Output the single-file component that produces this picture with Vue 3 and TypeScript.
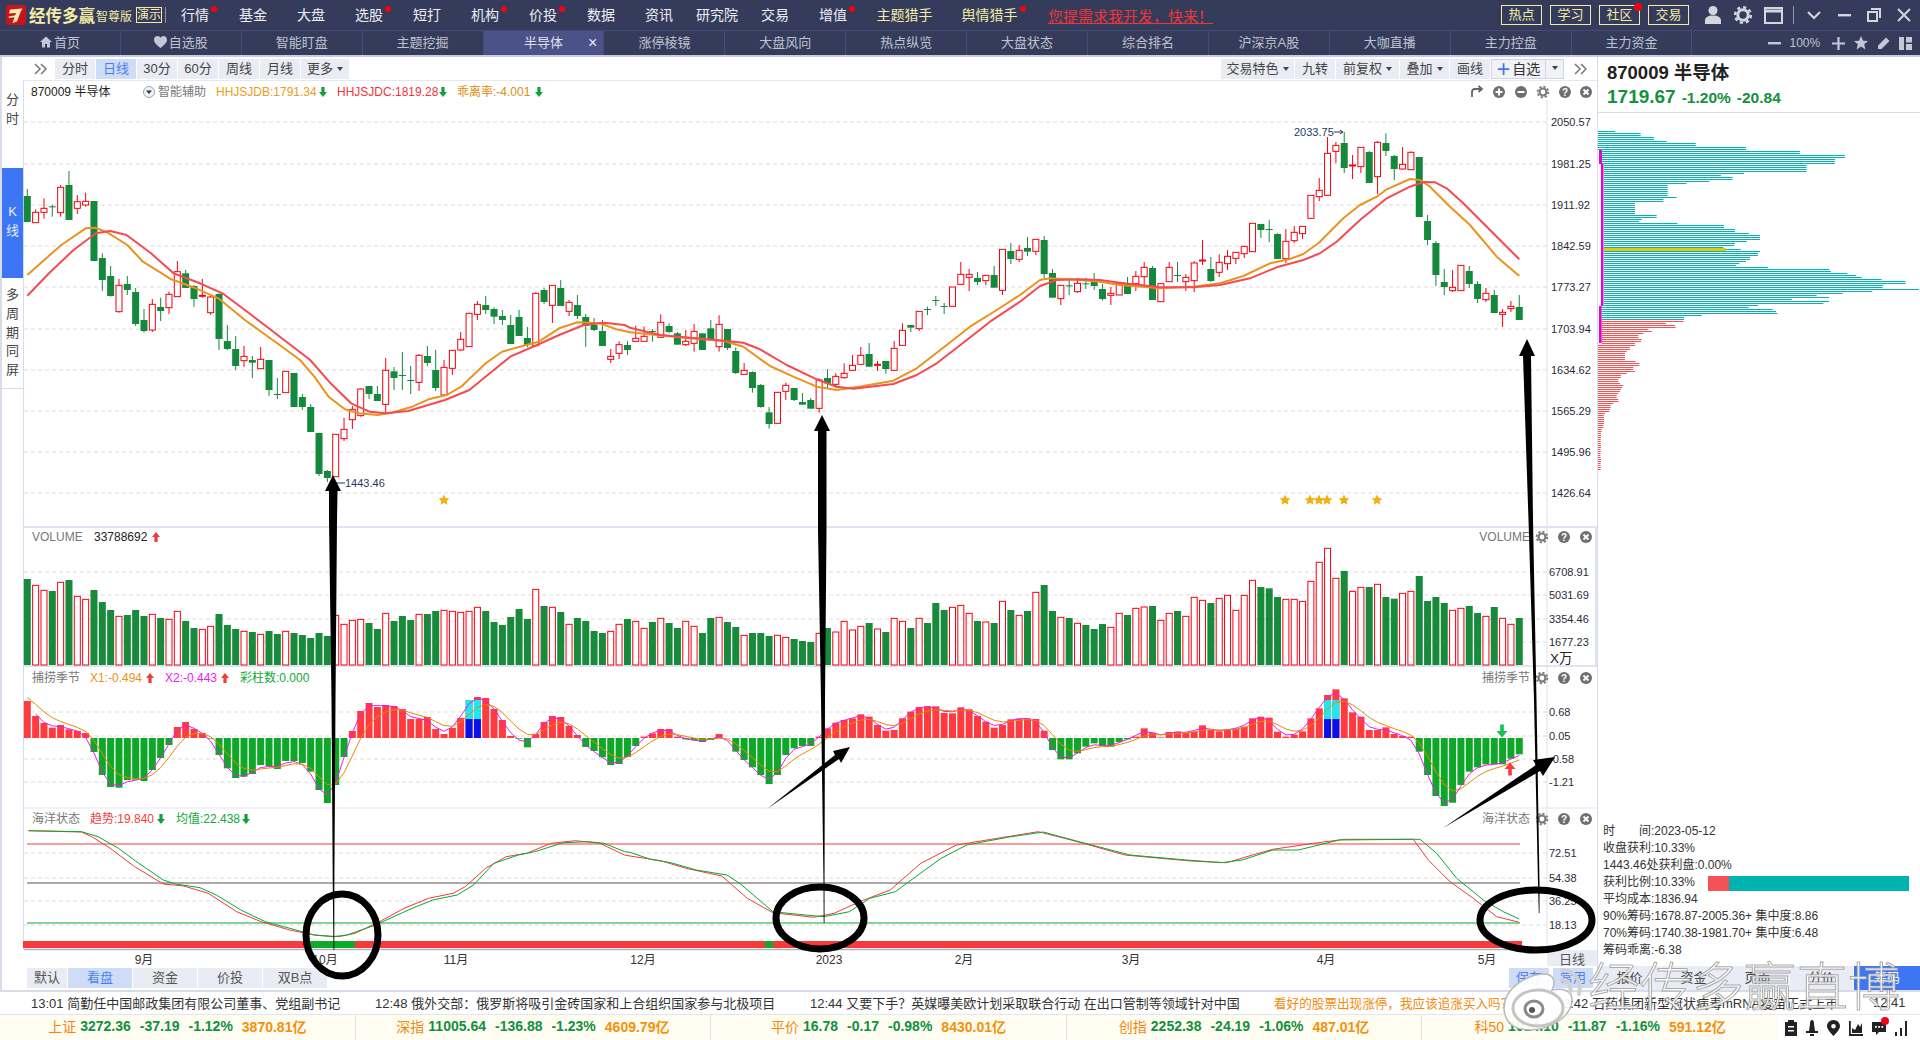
<script setup lang="ts">
const menu = [
  { t: '行情', dot: true }, { t: '基金' }, { t: '大盘' }, { t: '选股', dot: true }, { t: '短打' },
  { t: '机构', dot: true }, { t: '价投', dot: true }, { t: '数据' }, { t: '资讯' }, { t: '研究院' },
  { t: '交易' }, { t: '增值', dot: true },
]
const tabs = ['首页', '自选股', '智能盯盘', '主题挖掘', '半导体', '涨停棱镜', '大盘风向', '热点纵览', '大盘状态', '综合排名', '沪深京A股', '大咖直播', '主力控盘', '主力资金']
const periods = ['分时', '日线', '30分', '60分', '周线', '月线']
const news = [
  { t: '13:01 简勤任中国邮政集团有限公司董事、党组副书记', c: 'n1' },
  { t: '12:48 俄外交部：俄罗斯将吸引金砖国家和上合组织国家参与北极项目', c: 'n2' },
  { t: '12:44 又要下手？英媒曝美欧计划采取联合行动 在出口管制等领域针对中国', c: 'n3' },
  { t: '看好的股票出现涨停，我应该追涨买入吗？', c: 'n4' },
  { t: '2:42 石药集团新型冠状病毒mRNA疫苗正式上市', c: 'n5' },
  { t: '12:41', c: 'n6' },
]
const ticker = [
  ['上证', '3272.36', '-37.19', '-1.12%', '3870.81亿'],
  ['深指', '11005.64', '-136.88', '-1.23%', '4609.79亿'],
  ['平价', '16.78', '-0.17', '-0.98%', '8430.01亿'],
  ['创指', '2252.38', '-24.19', '-1.06%', '487.01亿'],
  ['科50', '1014.10', '-11.87', '-1.16%', '591.12亿'],
]
const info = ['时　　间:2023-05-12', '收盘获利:10.33%', '1443.46处获利盘:0.00%', '获利比例:10.33%', '平均成本:1836.94', '90%筹码:1678.87-2005.36+ 集中度:8.86', '70%筹码:1740.38-1981.70+ 集中度:6.48', '筹码乖离:-6.38']

const X = (i: number) => 27.3 + 8.335 * i
const Cd: number[][] = [
[0,228,306,207,306],[1,277,308,268,308],[1,265,277,235,296],[0,259,261,254,290],[1,202,278,195,290],[0,195,300,153,300],[1,245,265,225,282],[1,244,255,218,260],[0,243,423,243,423],[0,414,480,400,513],
[0,468,528,438,530],[1,496,575,477,578],[0,492,510,468,525],[0,516,612,504,618],[0,600,633,567,638],[1,553,630,537,636],[0,561,573,533,603],[1,523,563,515,582],[1,455,530,423,530],[0,460,504,450,504],
[0,498,537,495,561],[1,526,527,477,533],[1,531,578,525,585],[0,522,657,520,690],[0,663,687,615,690],[0,687,738,648,750],[1,709,722,678,741],[0,720,728,708,774],[1,718,746,681,746],[0,720,810,720,828],
[0,822,824,774,837],[1,754,818,754,818],[0,759,861,759,861],[0,831,861,822,870],[0,861,936,852,936],[0,939,1062,938,1068],[0,1053,1074,1050,1086],[1,943,1070,943,1070],[1,928,956,894,963],[1,868,899,858,927],
[1,807,887,805,890],[0,798,822,798,837],[0,822,843,798,843],[1,751,853,714,880],[0,754,774,741,810],[0,765,768,696,810],[0,780,782,738,822],[1,706,787,702,813],[0,708,729,678,738],[0,750,804,690,813],
[1,742,825,720,825],[1,691,745,691,765],[1,658,690,636,693],[1,580,680,578,680],[1,553,583,543,600],[0,555,570,528,582],[0,567,590,562,612],[0,588,600,570,615],[0,615,672,585,672],[0,591,648,570,648],
[0,654,675,621,682],[1,520,677,517,677],[0,510,546,504,552],[1,496,556,496,609],[0,504,558,480,558],[1,547,574,540,588],[0,555,588,525,597],[0,591,618,582,681],[0,615,630,594,633],[0,633,678,600,678],
[1,709,718,687,729],[1,674,700,664,717],[0,675,690,663,705],[1,655,664,617,664],[1,649,664,620,664],[0,633,636,627,665],[1,607,652,583,652],[0,618,636,610,640],[0,640,674,636,674],[1,664,674,630,678],
[1,634,670,612,695],[0,640,690,640,690],[0,625,660,600,660],[1,613,680,586,695],[0,627,684,627,690],[0,693,759,682,762],[1,751,763,729,763],[0,756,804,754,818],[0,795,861,792,863],[0,877,912,861,926],
[1,817,910,817,910],[1,796,814,788,840],[0,804,840,804,843],[0,846,854,819,854],[0,840,866,834,866],[1,780,865,775,878],[0,774,790,747,805],[1,769,793,760,803],[1,760,773,730,776],[1,736,751,705,751],
[1,706,733,681,733],[0,702,740,669,741],[1,733,735,723,753],[0,723,747,723,761],[1,685,751,663,751],[1,631,676,610,676],[0,615,623,615,636],[1,574,626,574,633],[0,567,569,560,585],[0,540,542,528,558],
[0,558,560,549,582],[1,501,559,501,559],[1,463,493,426,493],[1,463,472,447,513],[0,474,486,456,495],[1,466,482,466,495],[0,465,503,438,503],[1,388,511,388,525],[0,393,417,369,432],[1,391,418,375,426],
[0,384,395,351,408],[1,358,394,358,405],[0,360,462,348,475],[0,459,533,447,533],[1,496,536,496,555],[0,496,498,474,525],[1,490,515,474,519],[0,490,492,474,507],[0,486,498,459,510],[0,507,537,492,542],
[1,520,526,501,555],[1,490,525,490,525],[0,492,522,471,522],[1,469,491,453,513],[1,442,470,426,495],[0,444,540,438,540],[1,491,545,491,545],[1,442,485,426,485],[0,465,467,426,486],[1,472,485,462,513],
[1,429,482,423,516],[1,420,423,360,435],[0,447,483,411,486],[1,427,457,403,471],[1,409,431,390,450],[1,397,415,397,432],[1,379,401,379,414],[1,310,395,310,395],[0,312,330,312,354],[0,327,329,300,366],
[0,342,417,340,417],[1,364,416,327,429],[1,337,362,318,369],[1,319,341,319,357],[1,226,295,226,295],[1,211,230,174,243],[1,100,226,51,226],[1,76,94,66,129],[0,69,144,36,159],[1,135,137,105,177],
[1,82,140,82,159],[0,96,189,93,189],[1,67,170,63,222],[0,69,93,40,108],[0,108,147,105,180],[1,133,147,81,149],[1,97,149,94,149],[0,111,291,111,291],[0,303,360,285,375],[0,369,465,363,498],
[0,486,501,447,525],[1,502,512,450,516],[1,436,512,436,512],[0,453,492,438,504],[0,492,537,483,549],[1,520,539,504,546],[0,525,579,510,579],[1,577,583,567,621],[1,559,566,543,576],[0,561,600,525,600],
]
const Ym = (v: number) => 120 + v / 3
const candles = Cd.map((c, i) => ({
  x: X(i), up: c[0] === 1, top: Ym(c[1]), h: Math.max(1, (c[2] - c[1]) / 3), hi: Ym(c[3]), lo: Ym(c[4]),
}))

const pts = (a: number[][], fx: (x: number) => number, fy: (y: number) => number) => a.map(p => `${fx(p[0]).toFixed(1)},${fy(p[1]).toFixed(1)}`).join(' ')
const z7 = (x: number) => x / 2.45
const z10 = (x: number) => 630 + x / 3
const z11 = (x: number) => 1080 + x / 3
const maOrange = [
  pts([[67,465],[150,375],[210,325],[232,323],[260,335],[312,375],[350,425],[420,478],[480,505],[535,535],[600,600],[640,635],[685,675],[735,720],[770,770],[805,830],[845,868],[880,880],[925,885],[960,878],[1010,860],[1050,838],[1095,825],[1130,800],[1190,730],[1230,695],[1280,678],[1320,665],[1370,625],[1415,607],[1470,610],[1510,628]], z7, Ym),
  pts([[0,637],[80,645],[180,655],[280,662],[340,680],[420,738],[490,770],[560,800],[620,810],[700,798],[790,782],[860,745],[950,675],[1020,620],[1100,570],[1170,525],[1230,480],[1260,475]], z10, Ym),
  pts([[0,480],[60,485],[120,495],[240,505],[340,500],[420,490],[490,468],[570,430],[630,417],[670,402],[715,370],[790,295],[840,255],[890,230],[920,208],[990,177],[1020,180],[1050,200],[1110,260],[1170,315],[1250,410],[1318,468]], z11, Ym),
].join(' ')
const maRed = [
  pts([[67,527],[120,460],[180,390],[235,340],[270,333],[310,345],[370,400],[425,460],[490,490],[545,520],[600,570],[680,645],[760,720],[810,790],[860,850],[905,875],[945,880],[1000,873],[1090,840],[1150,810],[1200,760],[1250,710],[1310,678],[1370,645],[1430,615],[1480,608],[1530,615]], z7, Ym),
  pts([[0,623],[90,645],[180,653],[280,662],[340,668],[390,688],[470,735],[560,778],[620,800],[670,806],[790,792],[860,765],[920,730],[1000,668],[1080,605],[1170,545],[1230,498],[1280,480]], z10, Ym),
  pts([[0,478],[60,480],[120,488],[240,502],[340,502],[420,495],[510,475],[590,442],[670,420],[720,400],[770,365],[840,300],[920,235],[990,200],[1030,186],[1065,187],[1100,205],[1150,250],[1230,330],[1318,418]], z11, Ym),
].join(' ')

const volA = [177,196,211,213,187,180,229,238,210,246,270,289,285,270,288,283,294,298,274,303,324,328,319,282,315,327,334,336,343,333,342,334,339,345,354,339,348,286,313,301,298,309,327,280,303,288,300,283,282,273,271,274,277,274,262,273,306,315,291,267,297,208,258,262,276,313,294,303,333,339,334,313,297]
const volB = [274,295,276,265,279,294,274,289,309,264,262,276,291,316,309,309,318,316,322,327,333,336,310,294,306,274,300,289,279,297,306,265,274,294,265,279,219,240,232,226,250,273,276,279,214,240,256,243,187,165,243,262,264,280,285,297,282,292,250,255,235,231,228,271,250,243,259,202,211,219,205,196,241,196,151,171,175,201,208,208,214,154,97,55,145,123,184,172,171,163,201,206]
const volC = [220,214,168,243,231,249,271,265,258,279,289,261,295,313,294]
const vols = [...volA, ...volB.map(v => v + 30), ...volC]
const vBars = vols.slice(0, 180).map((v, i) => ({ x: X(i), y: 520 + v / 3, h: 665 - (520 + v / 3), up: Cd[i][0] === 1 }))

const tipA = [543,588,609,623,615,628,633,639,696,765,801,803,780,779,783,750,714,675,621,606,627,639,656,705,745,774,770,762,735,738,747,723,723,729,755,810,849,795,711,633,573,549,561,555,558,567,597,597,591,627,642,624,594,540,531,534,567,600,648,656,682,642,606,588,591,618,645,681,693,712,735,732,711]
const tipB = [648,620,610,597,597,620,628,630,636,630,612,625,665,690,712,735,762,735,675,655,648,648,620,595,578,570,565,553,560,585,602,600,565,545,531,529,529,549,550,532,538,558,575,593,585,568,566,565,567,602,660,688,688,670,650,640,648,650,636,628,620,595,608,622,606,605,609,605,586,600,604,598,596,590,565,560,563,605,620,614,604,565,535,495,478,505,547,560,600,600,592,612,618,620,665,735]
const tipC = [828,858,848,795,755,742,733,733,733,716,703]
const tips = [...tipA, ...tipB.map(v => v + 30), ...tipC]
const Yi = (v: number) => 520 + v / 3
const zero = Yi(654)
const special = new Set([53, 54, 156, 157])
const iBars = tips.slice(0, 180).map((v, i) => ({
  x: X(i), y: Math.min(Yi(v), zero), h: Math.abs(Yi(v) - zero), up: v < 654, sp: special.has(i),
}))
const tipY = tips.slice(0, 180).map(Yi)
const x2 = tipY.map((v, i) => (tipY[Math.max(0, i - 1)] + 2 * v + tipY[Math.min(179, i + 1)]) / 4)
let ema = 692
const x1 = x2.map(v => { ema = ema + 0.42 * (v - ema); return ema })
const lineX1 = x1.map((v, i) => `${X(i).toFixed(1)},${v.toFixed(1)}`).join(' ')
const lineX2 = x2.slice(1).map((v, i) => `${X(i + 1).toFixed(1)},${v.toFixed(1)}`).join(' ')

const Yo2 = (v: number) => 530 + v / 3
const z12 = (x: number) => 630 + x / 1.96
const z9 = (x: number) => 1400 + x / 3
const oceanG = [
  pts([[70,932],[200,935],[240,950],[290,985],[340,1030],[400,1080],[430,1092],[490,1103],[530,1125],[590,1170],[650,1205],[710,1225],[770,1245],[815,1250],[850,1245],[920,1215],[1000,1170],[1060,1140],[1120,1125],[1160,1095],[1210,1030],[1270,1005],[1310,995],[1380,968],[1440,965],[1480,970],[1530,995]], z7, Yi),
  pts([[0,967],[40,988],[80,998],[130,1020],[190,1035],[215,1060],[280,1145],[330,1153],[380,1160],[430,1145],[470,1105],[520,1085],[560,1040],[610,985],[660,945],[740,922],[810,906],[880,935],[980,975],[1090,990],[1160,998],[1200,990],[1260,960],[1310,960],[1390,930],[1530,928]], z12, Yo2),
  pts([[60,958],[110,1000],[170,1075],[250,1140],[310,1175],[358,1197]], z9, Yi),
].join(' ')
const oceanR = [
  pts([[70,932],[200,936],[225,950],[270,985],[330,1040],[400,1092],[450,1098],[510,1120],[580,1175],[640,1205],[710,1230],[770,1245],[830,1250],[870,1240],[930,1205],[990,1165],[1050,1135],[1110,1120],[1140,1100],[1190,1045],[1240,1010],[1290,1000],[1350,970],[1410,962],[1470,970],[1530,1005]], z7, Yi),
  pts([[0,978],[60,992],[110,1015],[180,1038],[230,1105],[280,1148],[360,1162],[400,1150],[450,1115],[510,1080],[570,1000],[640,945],[720,925],[800,905],[870,932],[970,975],[1040,985],[1100,993],[1170,998],[1220,975],[1260,958],[1340,940],[1400,928],[1530,928]], z12, Yo2),
  pts([[40,958],[85,1020],[150,1085],[220,1135],[290,1190],[358,1207]], z9, Yi),
].join(' ')

const ends = [285,362,362,402,402,440,527,527,678,678,840,840,975,975,945,945,945,860,860,860,860,672,603,638,638,568,500,443,443,443,443,443,443,470,430,430,345,345,345,345,345,345,410,410,365,357,472,612,612,645,645,687,720,720,720,680,645,642,610,662,720,714,714,690,690,678,658,648,744,928,933,982,1008,1025,1085,1157,1157,1090,1088,1197,1057,968,890,927,815,927,910,714,686,758,768,772,545,492,492,490,437,465,467,385,395,370,355,356,365,363,345,345,330,330,320,315,315,315,315,346,358,358,340,340,345,320,303,303,295,295,300,310,307,303,300,295,290,290,295,296,280,272,272,270,268,255,252,252,252,252,252,250,250,245,245,243,243,243,242,242,242,243,243,242,242,241,241,242,243,243,242,242,242,242]
const profile = ends.map((e, k) => {
  const v = 62 + 6 * k
  const sv = v < 119 || v > 700 ? 233 : v < 160 || v >= 590 ? 245 : 252
  return { x: 1520 + sv / 3, y: 131 + 2 * k, w: (e - sv) / 3, red: v >= 628 }
})

const mainGrid = [['2050.57', 122], ['1981.25', 164], ['1911.92', 205], ['1842.59', 246], ['1773.27', 287], ['1703.94', 329], ['1634.62', 370], ['1565.29', 411], ['1495.96', 452], ['1426.64', 493]] as [string, number][]
const lowerGrid = [['6708.91', 572], ['5031.69', 595], ['3354.46', 619], ['1677.23', 642], ['0.68', 712], ['0.05', 736], ['-0.58', 759], ['-1.21', 782], ['72.51', 853], ['54.38', 878], ['36.25', 901], ['18.13', 925]] as [string, number][]
const months = [['9月', 144], ['10月', 325], ['11月', 456], ['12月', 643], ['2023', 829], ['2月', 964], ['3月', 1131], ['4月', 1326], ['5月', 1487]] as [string, number][]
const stars = [444, 1285, 1310, 1319, 1327, 1344, 1377]
const ctrl = [
  { k: 'redo', x: 1477, y: 92 }, { k: 'plus', x: 1499, y: 92 }, { k: 'minus', x: 1521, y: 92 }, { k: 'gear', x: 1543, y: 92 }, { k: 'help', x: 1565, y: 92 }, { k: 'close', x: 1586, y: 92 },
  { k: 'gear', x: 1542, y: 537 }, { k: 'help', x: 1564, y: 537 }, { k: 'close', x: 1586, y: 537 },
  { k: 'gear', x: 1542, y: 678 }, { k: 'help', x: 1564, y: 678 }, { k: 'close', x: 1586, y: 678 },
  { k: 'gear', x: 1542, y: 819 }, { k: 'help', x: 1564, y: 819 }, { k: 'close', x: 1586, y: 819 },
]
const arrows = [
  { x: 323, y: 92, up: false }, { x: 443, y: 92, up: false }, { x: 539, y: 92, up: false },
  { x: 156, y: 537, up: true }, { x: 150, y: 678, up: true }, { x: 225, y: 678, up: true },
  { x: 161, y: 819, up: false }, { x: 246, y: 819, up: false },
]
const arrowUp = '-1.6,5 1.6,5 1.6,0 4,0 0,-5 -4,0 -1.6,0'
const arrowDown = '-1.6,-5 1.6,-5 1.6,0 4,0 0,5 -4,0 -1.6,0'
const starPts = '0,-5.5 1.6,-1.9 5.4,-1.6 2.6,1 3.4,4.8 0,2.8 -3.4,4.8 -2.6,1 -5.4,-1.6 -1.6,-1.9'
</script>

<template>
  <div class="page">
    <header class="top">
      <svg class="logo" viewBox="0 0 20 20">
        <rect width="20" height="20" rx="2.5" fill="#c5141c" />
        <path d="M4 4.5 L16.5 3.5 L14.5 7 L11 16.5 L6.5 18 L10 8 L3 8.5 Z" fill="#fbe9b0" />
        <path d="M2.5 11.5 L11 10 L10 12 L3 13 Z" fill="#fbe9b0" />
      </svg>
      <span class="brand">经传多赢</span>
      <span class="edition">智尊版</span>
      <span class="demo">演示</span>
      <span class="vsep"></span>
      <nav class="menu">
        <span v-for="m in menu" :key="m.t" class="mi">{{ m.t }}<i v-if="m.dot" class="dot"></i></span>
        <span class="mi wide yellow">主题猎手</span>
        <span class="mi wide yellow">舆情猎手<i class="dot far"></i></span>
      </nav>
      <a class="need">您提需求我开发，快来！</a>
      <div class="topright">
        <span class="box">热点</span>
        <span class="box">学习</span>
        <span class="box">社区<i class="dot boxdot"></i></span>
        <span class="box">交易</span>
        <span class="tico"><svg width="18" height="20" viewBox="0 0 18 20" fill="#d4d6de"><circle cx="9" cy="5.5" r="4.5" /><path d="M1 19v-3.5c0-3 3-5 8-5s8 2 8 5V19z" /></svg></span>
        <span class="tico"><svg width="20" height="20" viewBox="-10 -10 20 20" fill="none" stroke="#d4d6de"><circle r="5.2" stroke-width="3" /><circle r="7.8" stroke-width="2.6" stroke-dasharray="3.2 2.9" /></svg></span>
        <span class="tico"><svg width="19" height="17" viewBox="0 0 19 17" fill="none" stroke="#d4d6de"><rect x="1" y="1" width="17" height="15" stroke-width="2" /><path d="M1 4h17" stroke-width="3" /></svg></span>
        <span class="sep2"></span>
        <span class="tico"><svg width="14" height="10" viewBox="0 0 14 10" fill="none" stroke="#d4d6de" stroke-width="2"><path d="M1 2l6 6 6-6" /></svg></span>
        <span class="tico"><svg width="13" height="3" viewBox="0 0 13 3" fill="#d4d6de"><rect width="13" height="2.4" /></svg></span>
        <span class="tico"><svg width="14" height="14" viewBox="0 0 14 14" fill="none" stroke="#d4d6de" stroke-width="2"><rect x="1" y="4" width="9" height="9" /><path d="M4 1h9v9" /></svg></span>
        <span class="tico"><svg width="14" height="14" viewBox="0 0 14 14" fill="none" stroke="#d4d6de" stroke-width="2"><path d="M1 1l12 12M13 1L1 13" /></svg></span>
      </div>
    </header>

    <div class="tabs">
      <div v-for="(t, i) in tabs" :key="t" class="tab" :class="{ on: i === 4 }">
        <svg v-if="i === 0" class="ti" width="12" height="12" viewBox="0 0 12 12" fill="#c4c8d6"><path d="M6 0.5L0 6h2v5.5h3V8h2v3.5h3V6h2z" /></svg>
        <svg v-if="i === 1" class="ti" width="13" height="12" viewBox="0 0 13 12" fill="#c4c8d6"><path d="M6.5 12C2 8.5 0 6.5 0 3.8 0 1.6 1.6 0 3.5 0c1.3 0 2.4.7 3 1.8C7.1.7 8.2 0 9.5 0 11.4 0 13 1.6 13 3.8 13 6.5 11 8.5 6.5 12z" /></svg>{{ t }}<span v-if="i === 4" class="tabx">×</span>
      </div>
      <div class="tabtools">
        <svg width="13" height="3" viewBox="0 0 13 3" fill="#c4c8d6"><rect width="13" height="2.4" /></svg>
        <span class="pct">100%</span>
        <svg width="13" height="13" viewBox="0 0 13 13" fill="#c4c8d6"><path d="M5.4 0h2.2v5.4H13v2.2H7.6V13H5.4V7.6H0V5.4h5.4z" /></svg>
        <svg width="14" height="14" viewBox="-7 -7 14 14" fill="#c4c8d6"><polygon points="0,-7 2,-2.3 7,-2 3.2,1.3 4.4,6.4 0,3.6 -4.4,6.4 -3.2,1.3 -7,-2 -2,-2.3" /></svg>
        <svg width="13" height="13" viewBox="0 0 13 13" fill="#c4c8d6"><path d="M9 0.5l3.500 3.500-8 8H1v-3.500z" /></svg>
        <svg width="13" height="13" viewBox="0 0 13 13" fill="#c4c8d6"><rect width="5" height="13" /><rect x="7" width="6" height="5.5" /><rect x="7" y="7" width="6" height="6" /></svg>
      </div>
    </div>

    <main class="body">
      <aside class="side">
        <div class="sitem s1"><span>分</span><span>时</span></div>
        <div class="sitem s2"><span>K</span><span>线</span></div>
        <div class="sitem s3"><span>多</span><span>周</span><span>期</span><span>同</span><span>屏</span></div>
      </aside>

      <section class="chartcol">
        <div class="toolbar">
          <svg class="dbl" width="14" height="12" viewBox="0 0 14 12" fill="none" stroke="#777" stroke-width="1.5"><path d="M1 1l5 5-5 5M7 1l5 5-5 5" /></svg>
          <div class="tgroup">
            <span v-for="(p, i) in periods" :key="p" class="tb" :class="{ act: i === 1 }">{{ p }}</span>
            <span class="tb more">更多<i class="car"></i></span>
          </div>
          <div class="tgroup right">
            <span class="tb w72">交易特色<i class="car"></i></span>
            <span class="tb">九转</span>
            <span class="tb w59">前复权<i class="car"></i></span>
            <span class="tb w49">叠加<i class="car"></i></span>
            <span class="tb">画线</span>
            <span class="fav"><b class="plus">+</b>自选</span>
            <span class="favdrop"><i class="car"></i></span>
          </div>
          <svg class="dbl2" width="14" height="12" viewBox="0 0 14 12" fill="none" stroke="#777" stroke-width="1.5"><path d="M1 1l5 5-5 5M7 1l5 5-5 5" /></svg>
        </div>

        <svg class="canvas" width="1574" height="885" viewBox="23 81 1574 885">
          <!-- frames -->
          <rect x="23" y="527" width="1573" height="139" fill="none" stroke="#d6dbee" stroke-width="1.5" />
          <line x1="23.5" y1="81" x2="23.5" y2="950" stroke="#d6dbee" />
          <line x1="1547" y1="100" x2="1547" y2="950" stroke="#dfe2ee" />
          <line x1="24" y1="808" x2="1597" y2="808" stroke="#eceef4" stroke-width="1.5" />
          <line x1="24" y1="949.5" x2="1547" y2="949.5" stroke="#b0b3bf" stroke-width="1.5" />

          <!-- grid -->
          <line v-for="g in mainGrid" :key="g[0]" x1="24" :y1="g[1]" x2="1547" :y2="g[1]" class="grid" />
          <line v-for="g in lowerGrid" :key="g[0]" x1="24" :y1="g[1]" x2="1547" :y2="g[1]" class="grid" />
          <text v-for="g in mainGrid" :key="g[0]" x="1551" :y="g[1] + 4" class="ax">{{ g[0] }}</text>
          <text v-for="g in lowerGrid" :key="g[0]" x="1549" :y="g[1] + 4" class="ax">{{ g[0] }}</text>
          <text x="1550" y="663" class="xw">X万</text>

          <!-- candles -->
          <g v-for="(c, i) in candles" :key="i">
            <line :x1="c.x" :x2="c.x" :y1="c.hi" :y2="c.lo" :stroke="c.up ? '#f5000f' : '#14883c'" stroke-width="1" />
            <rect v-if="c.up" :x="c.x - 3" :y="c.top" width="6" :height="c.h" fill="#fff" stroke="#f5000f" stroke-width="1" />
            <rect v-else :x="c.x - 3.5" :y="c.top" width="7" :height="c.h" fill="#14883c" />
          </g>
          <polyline :points="maOrange" class="ma" stroke="#e8941e" />
          <polyline :points="maRed" class="ma" stroke="#f54a52" />

          <text x="345" y="487" class="mark">1443.46</text>
          <line x1="336" y1="483" x2="345" y2="483" stroke="#1f3a5f" />
          <text x="1294" y="136" class="mark">2033.75</text>
          <path d="M1334 132h9M1340 130l3 2-3 2" stroke="#1f3a5f" fill="none" />
          <polygon v-for="s in stars" :key="s" :points="starPts" :transform="`translate(${s},500)`" fill="#f6ae0d" />

          <!-- legends -->
          <text x="31" y="96" class="lg dark">870009 半导体</text>
          <circle cx="149" cy="92" r="5.5" fill="#eef3f8" stroke="#8fa6b8" />
          <path d="M146 90.5h6l-3 3.500z" fill="#333" />
          <text x="158" y="96" class="lg gray">智能辅助</text>
          <text x="216" y="96" class="lg" fill="#f09a20">HHJSJDB:1791.34</text>
          <text x="337" y="96" class="lg" fill="#f4343a">HHJSJDC:1819.28</text>
          <text x="457" y="96" class="lg" fill="#df8a12">乖离率:-4.001</text>
          <text x="32" y="541" class="lg gray">VOLUME</text>
          <text x="94" y="541" class="lg dark">33788692</text>
          <text x="1530" y="541" class="lg gray" text-anchor="end">VOLUME</text>
          <text x="32" y="682" class="lg gray">捕捞季节</text>
          <text x="90" y="682" class="lg" fill="#f09020">X1:-0.494</text>
          <text x="165" y="682" class="lg" fill="#f018f0">X2:-0.443</text>
          <text x="240" y="682" class="lg" fill="#12a83a">彩柱数:0.000</text>
          <text x="1530" y="682" class="lg gray" text-anchor="end">捕捞季节</text>
          <text x="32" y="823" class="lg gray">海洋状态</text>
          <text x="90" y="823" class="lg" fill="#f43c3c">趋势:19.840</text>
          <text x="176" y="823" class="lg" fill="#12a83a">均值:22.438</text>
          <text x="1530" y="823" class="lg gray" text-anchor="end">海洋状态</text>
          <polygon v-for="(a, i) in arrows" :key="i" :points="a.up ? arrowUp : arrowDown" :transform="`translate(${a.x},${a.y})`" :fill="a.up ? '#f33a3a' : '#12a03c'" />

          <!-- control icons -->
          <g v-for="(ic, i) in ctrl" :key="i" :transform="`translate(${ic.x},${ic.y})`">
            <template v-if="ic.k === 'redo'">
              <path d="M-5 5V0A3 3 0 0 1 -2 -3H4M1.5 -6L5 -3L1.5 0" fill="none" stroke="#666" stroke-width="1.8" />
            </template>
            <template v-else-if="ic.k === 'gear'">
              <circle r="3.5" fill="none" stroke="#7a7a7a" stroke-width="2.2" />
              <circle r="5.4" fill="none" stroke="#7a7a7a" stroke-width="1.8" stroke-dasharray="2.2 2" />
            </template>
            <template v-else>
              <circle r="6" fill="#6f6f6f" />
              <path v-if="ic.k === 'plus'" d="M-3.5 0H3.5M0 -3.5V3.5" stroke="#fff" stroke-width="2" />
              <path v-if="ic.k === 'minus'" d="M-3.5 0H3.5" stroke="#fff" stroke-width="2" />
              <path v-if="ic.k === 'close'" d="M-2.5 -2.5L2.5 2.5M2.5 -2.5L-2.5 2.5" stroke="#fff" stroke-width="2" />
              <text v-if="ic.k === 'help'" y="4" text-anchor="middle" class="help">?</text>
            </template>
          </g>

          <!-- volume -->
          <g v-for="(b, i) in vBars" :key="i">
            <rect v-if="b.up" :x="b.x - 3" :y="b.y" width="6" :height="b.h" fill="#fff" stroke="#f5000f" stroke-width="1" />
            <rect v-else :x="b.x - 3.5" :y="b.y" width="7" :height="b.h" fill="#178a3c" />
          </g>

          <!-- indicator -->
          <g v-for="(b, i) in iBars" :key="i">
            <rect :x="b.x - 3.5" :y="b.y" width="7" :height="b.h" :fill="b.up ? '#ff3b3f' : '#0ea828'" />
            <template v-if="b.sp">
              <rect :x="b.x - 3.5" :y="Yi(540)" width="7" :height="19" fill="#1ce8f0" />
              <rect :x="b.x - 3.5" :y="Yi(597)" width="7" :height="19" fill="#0812e8" />
            </template>
          </g>
          <polyline :points="lineX2" class="thin" stroke="#f018f0" />
          <polyline :points="lineX1" class="thin" stroke="#e58a00" />
          <polygon points="-1.8,-6.5 1.8,-6.5 1.8,0 5.5,0 0,6.5 -5.5,0 -1.8,0" transform="translate(1502,731)" fill="#17bf57" />
          <polygon points="-1.8,6.5 1.8,6.5 1.8,0 5.5,0 0,-6.5 -5.5,0 -1.8,0" transform="translate(1510,769)" fill="#f9373d" />

          <!-- ocean -->
          <line x1="27" y1="844" x2="1520" y2="844" stroke="#f23a3a" />
          <line x1="27" y1="883" x2="1520" y2="883" stroke="#555" />
          <line x1="27" y1="923" x2="1520" y2="923" stroke="#0aa832" />
          <polyline :points="oceanR" class="thin" stroke="#f23a3a" />
          <polyline :points="oceanG" class="thin" stroke="#0aa832" />
          <rect x="23" y="941" width="1499" height="7" fill="#f83a3c" />
          <rect x="304" y="941" width="51" height="7" fill="#0eaa28" />
          <rect x="765" y="941" width="8" height="7" fill="#0eaa28" />

          <!-- months -->
          <text v-for="m in months" :key="m[0]" :x="m[1]" y="964" text-anchor="middle" class="mon">{{ m[0] }}</text>
          <rect x="1547" y="950" width="50" height="16" fill="#e9ecf4" />
          <text x="1572" y="964" text-anchor="middle" class="dayl">日线</text>
        </svg>

        <div class="bottomtabs">
          <span class="bt w40">默认</span>
          <span class="bt act">看盘</span>
          <span class="bt">资金</span>
          <span class="bt">价投</span>
          <span class="bt">双B点</span>
          <span class="savegrp"><span class="sv">保存</span><span class="sv">常用</span></span>
        </div>
      </section>

      <aside class="panel">
        <div class="phead">
          <div class="ptitle">870009 半导体</div>
          <div class="pquote"><b class="big">1719.67</b><b>-1.20%</b><b>-20.84</b></div>
        </div>
        <svg class="profile" width="322" height="705" viewBox="1598 113 322 705">
          <rect x="1599" y="150" width="3" height="14" fill="#e800d8" />
          <rect x="1601" y="164" width="2.5" height="142" fill="#e800d8" />
          <rect x="1599" y="306" width="2.7" height="37" fill="#e800d8" />
          <rect v-for="(p, i) in profile" :key="i" :x="p.x" :y="p.y" :width="p.w" height="1" :fill="p.red ? '#ff4d4d' : '#00b5b3'" />
          <rect x="1604" y="248" width="122" height="3" fill="#e3c90a" />
        </svg>
        <div class="pinfo">
          <div v-for="(l, i) in info" :key="l" class="il">{{ l }}<span v-if="i === 3" class="ratio"><i class="rr"></i></span></div>
        </div>
        <div class="ptabs">
          <span class="pt">报价</span><span class="pt">资金</span><span class="pt">页面</span><span class="pt">分价</span><span class="pt on">筹码</span>
        </div>
      </aside>
    </main>

    <div class="news">
      <span v-for="n in news" :key="n.c" class="nitem" :class="n.c">{{ n.t }}</span>
    </div>

    <footer class="ticker">
      <div v-for="t in ticker" :key="t[0]" class="tk">
        <span class="tl">{{ t[0] }}</span><b class="tn">{{ t[1] }}</b><b class="tn">{{ t[2] }}</b><b class="tn">{{ t[3] }}</b><b class="ta">{{ t[4] }}</b>
      </div>
      <div class="ticons">
        <svg width="12" height="16" viewBox="0 0 12 16" fill="#222"><path d="M0 2h3V0h6v2h3v14H0zM3 6v1.5h6V6zM3 10v1.5h6V10z" fill-rule="evenodd" /></svg>
        <svg width="12" height="16" viewBox="0 0 12 16" fill="#222"><path d="M6 0c1.5 0 2 1.5 2 4l1 7h3v2H0v-2h3l1-7c0-2.5.5-4 2-4zM4 14h4v2H4z" /></svg>
        <svg width="13" height="16" viewBox="0 0 13 16" fill="#222"><path d="M6.5 0C10 0 13 2.800 13 6.300 13 10 6.500 16 6.500 16S0 10 0 6.300C0 2.800 3 0 6.500 0zm0 4a2.300 2.300 0 100 4.600 2.300 2.300 0 000-4.600z" fill-rule="evenodd" /></svg>
        <svg width="14" height="15" viewBox="0 0 14 15" fill="#222"><path d="M0 0h1.800v13H14v2H0zM3 12V7l3 2 3-6 2 3 2-4v10z" /></svg>
        <svg width="14" height="14" viewBox="0 0 14 14" fill="#222"><path d="M0 1h14v10H7l-3 3v-3H0zM3 5v1.800h1.800V5zM6.200 5v1.800H8V5zM9.400 5v1.800h1.800V5z" fill-rule="evenodd" /></svg>
        <svg width="12" height="15" viewBox="0 0 12 15" fill="#222"><rect y="11" width="2" height="4" /><rect x="5" y="7" width="2" height="8" /><rect x="10" width="2" height="15" /></svg>
      </div>
      <i class="dot tdot"></i>
    </footer>

    <!-- hand-drawn annotations over the chart -->
    <svg class="annot" width="1920" height="1040" viewBox="0 0 1920 1040">
      <polygon points="333,475 341,491 337.5,491 337,520 335.5,700 334.3,890 334.3,950 333.5,950 332.8,890 331.5,700 329,520 329,491 325,491" fill="#000" />
      <polygon points="822,415 830,431 826.5,431 826.5,530 825,700 824.5,883 824.5,923 823.7,923 823.5,883 821,700 818,530 818,431 814,431" fill="#000" />
      <polygon points="1527,339 1535,356 1531,356 1533,520 1536.5,700 1539.5,883 1539.5,913 1538.8,913 1538,883 1534,700 1528.5,520 1523,356 1519,356" fill="#000" />
      <polygon points="767,809 835,755 833,751 850,747 841,763 839,759" fill="#000" />
      <polygon points="1443,828 1536,765 1533,760 1555,757 1543,776 1540,771" fill="#000" />
      <ellipse cx="342" cy="935" rx="36" ry="41" fill="none" stroke="#000" stroke-width="7" />
      <ellipse cx="820" cy="918" rx="44" ry="31" fill="none" stroke="#000" stroke-width="7" />
      <ellipse cx="1536" cy="920" rx="56" ry="30" fill="none" stroke="#000" stroke-width="7" />
    </svg>

    <!-- watermark -->
    <svg class="wlogo" width="100" height="80" viewBox="0 0 100 80">
      <path d="M10 46C10 26 34 12 50 12c10 0 12 8 8 16 10-2 20 0 20 10 0 16-22 30-42 30C20 68 10 60 10 46z" fill="rgba(255,255,255,.92)" stroke="#b9b9b9" stroke-width="1.5" />
      <ellipse cx="44" cy="46" rx="25" ry="18" fill="none" stroke="#c4c4c4" stroke-width="3" />
      <ellipse cx="40" cy="47" rx="9" ry="8" fill="#fff" stroke="#8a8a8a" stroke-width="3" />
      <circle cx="38" cy="48" r="3" fill="#555" />
      <path d="M68 8c12 0 20 10 17 24M68 18c6 0 10 5 8 12" fill="none" stroke="#d0d0d0" stroke-width="4" stroke-linecap="round" />
    </svg>
    <div class="wtext">经传多赢直博</div>
  </div>
</template>

<style>
html, body { margin: 0; padding: 0; background: #fff; }
</style>

<style scoped>
.page {
  position: relative;
  width: 1920px;
  height: 1040px;
  overflow: hidden;
  display: flex;
  flex-direction: column;
  font-family: "Liberation Sans", "Noto Sans CJK SC", sans-serif;
  font-size: 13px;
  color: #333;
  background: #fff;
}
i { font-style: normal; }
.top {
  height: 31px;
  flex: none;
  display: flex;
  align-items: center;
  background: #353c5b;
  border-bottom: 1px solid #444b74;
  box-sizing: border-box;
  color: #eceef5;
}
.logo { width: 20px; height: 20px; margin-left: 6px; flex: none; }
.brand { margin-left: 3px; width: 67px; font-size: 16.5px; font-weight: 700; color: #f3eba6; white-space: nowrap; }
.edition { width: 40px; font-size: 12px; color: #f3eba6; white-space: nowrap; }
.demo { width: 26px; height: 16px; line-height: 15px; box-sizing: border-box; border: 1px solid #f3eba6; color: #f3eba6; font-size: 12px; text-align: center; }
.vsep { width: 1px; height: 16px; background: #8e92a8; margin-left: 3px; }
.menu { display: flex; margin-left: 0; }
.mi { position: relative; width: 58px; text-align: center; font-size: 14px; line-height: 31px; white-space: nowrap; }
.mi.wide { width: 85px; }
.yellow { color: #f3eba6; }
.dot { position: absolute; left: 45px; top: 6px; width: 6px; height: 6px; border-radius: 50%; background: #f00412; }
.dot.far { left: 73px; }
.need { margin-left: 16px; font-size: 15px; color: #ef3535; text-decoration: underline; white-space: nowrap; }
.topright { margin-left: auto; width: 419px; display: flex; align-items: center; }
.box { position: relative; flex: none; width: 41px; height: 20px; line-height: 18px; box-sizing: border-box; border: 1px solid #f3eba6; color: #f3eba6; font-size: 13px; text-align: center; margin-right: 8px; }
.box:nth-child(4) { margin-right: 9px; }
.boxdot { left: 34px; top: -3px; width: 8px; height: 8px; }
.tico { flex: none; width: 30px; display: flex; justify-content: center; align-items: center; }
.sep2 { flex: none; width: 1px; height: 18px; background: #8e92a8; margin: 0 5px; }

.tabs {
  height: 26px;
  flex: none;
  display: flex;
  background: #353c5b;
  border-bottom: 2px solid #c5cce4;
  box-sizing: border-box;
}
.tab {
  position: relative;
  width: 120.9px;
  flex: none;
  box-sizing: border-box;
  border-right: 1px solid #454c78;
  color: #bfc3d1;
  text-align: center;
  line-height: 24px;
  font-size: 13px;
  white-space: nowrap;
}
.tab.on { background: #4a5288; color: #dfe2ee; }
.ti { margin-right: 2px; vertical-align: -1px; }
.tabx { position: absolute; right: 6px; top: 0; font-size: 16px; color: #e8e8f0; }
.tabtools { flex: 1; display: flex; align-items: center; gap: 9px; padding-left: 76px; color: #bfc3d1; }
.pct { font-size: 12px; margin-right: 3px; margin-left: -1px; }

.body { flex: none; height: 933px; display: flex; }
.side { width: 23px; flex: none; box-sizing: border-box; border-left: 2px solid #d9dce8; display: flex; flex-direction: column; background: #fff; }
.sitem { display: flex; flex-direction: column; align-items: center; justify-content: center; font-size: 13px; line-height: 18.7px; color: #444; }
.s1 { height: 111px; align-items: center; justify-content: flex-start; padding-top: 34px; box-sizing: border-box; }
.s2 { height: 110px; background: #3c76f5; color: #e8eefc; padding-bottom: 2px; box-sizing: border-box; }
.s3 { height: 111px; border-bottom: 1px solid #d9dce8; box-sizing: border-box; }

.chartcol { width: 1574px; flex: none; display: flex; flex-direction: column; }
.toolbar { height: 24px; flex: none; display: flex; box-sizing: border-box; padding-top: 2px; border-bottom: 1px solid #e6e8f0; position: relative; }
.dbl { margin: 4px 0 0 11px; flex: none; }
.dbl2 { position: absolute; left: 1551px; top: 6px; }
.tgroup { display: flex; gap: 1px; margin-left: 7px; height: 20px; }
.tgroup.right { position: absolute; left: 1198px; top: 2px; margin: 0; }
.tb { width: 40px; height: 20px; background: #e9ecf4; text-align: center; line-height: 20px; font-size: 13px; color: #444; white-space: nowrap; }
.tb.act { background: #cfdcf5; color: #4a7ff0; }
.tb.more { width: 48px; }
.w72 { width: 73px; }
.w59 { width: 63px; }
.w49 { width: 49px; }
.car { display: inline-block; width: 0; height: 0; border: 3.5px solid transparent; border-top: 4px solid #444; border-bottom: 0; margin-left: 4px; vertical-align: 2px; }
.fav { width: 55px; height: 20px; box-sizing: border-box; border: 1px solid #cfd5e6; background: #f0f2f8; text-align: center; line-height: 18px; font-size: 14px; color: #333; white-space: nowrap; }
.plus { color: #3c76f5; font-size: 23px; font-weight: 400; vertical-align: -3px; margin-right: 2px; line-height: 14px; }
.favdrop { width: 18px; height: 20px; box-sizing: border-box; border: 1px solid #cfd5e6; border-left: 0; background: #f0f2f8; text-align: center; line-height: 16px; margin-left: -1px; }
.favdrop .car { margin: 0; }

.canvas { display: block; flex: none; }
.grid { stroke: #dcdcdc; stroke-dasharray: 4 3; stroke-width: 1; }
.ax { font-size: 11px; fill: #2a2a3a; }
.xw { font-size: 13.5px; fill: #222; }
.ma { fill: none; stroke-width: 2; stroke-linejoin: round; }
.thin { fill: none; stroke-width: 1; stroke-linejoin: round; }
.mark { font-size: 11px; fill: #1f3a5f; }
.lg { font-size: 12px; }
.lg.dark { fill: #222; }
.lg.gray { fill: #777; }
.help { font-size: 10px; font-weight: 700; fill: #fff; }
.mon { font-size: 12px; fill: #333; }
.dayl { font-size: 13px; fill: #555; }

.bottomtabs { height: 24px; flex: none; display: flex; gap: 1px; padding: 2px 0 0 4px; box-sizing: border-box; position: relative; }
.bt { width: 64px; height: 20px; background: #e9ecf4; text-align: center; line-height: 20px; font-size: 13px; color: #555; white-space: nowrap; }
.bt.w40 { width: 40px; }
.bt.act { background: #cfdcf5; color: #4a7ff0; }
.savegrp { position: absolute; left: 1486px; top: 2px; display: flex; gap: 4px; }
.sv { width: 40px; height: 20px; background: #cfdcf5; color: #4a7ff0; text-align: center; line-height: 20px; font-size: 13px; }

.panel { flex: 1; display: flex; flex-direction: column; box-sizing: border-box; border-left: 1px solid #d6dbee; min-width: 0; }
.phead { height: 56px; flex: none; box-sizing: border-box; border-bottom: 1px solid #d6dbee; padding: 4px 0 0 9px; }
.ptitle { font-size: 18.5px; font-weight: 700; color: #222; line-height: 24px; white-space: nowrap; }
.pquote { display: flex; align-items: baseline; gap: 6px; color: #14913d; font-size: 15.5px; line-height: 24px; white-space: nowrap; }
.big { font-size: 19px; }
.profile { display: block; flex: none; position: absolute; left: 1598px; top: 113px; }
.pinfo { margin-top: auto; padding: 0 0 7px 5px; position: relative; }
.il { height: 17px; line-height: 17px; font-size: 12px; color: #333; white-space: nowrap; position: relative; }
.ratio { position: absolute; left: 105px; top: 2px; width: 201px; height: 15px; background: #00b2b0; }
.rr { display: block; width: 21px; height: 15px; background: #f55257; }
.ptabs { height: 24px; flex: none; display: flex; background: #e9ecf4; }
.pt { width: 64px; text-align: center; line-height: 24px; font-size: 13px; color: #444; border-right: 1px solid #f8f8fb; box-sizing: border-box; }
.pt.on { flex: 1; background: #3d75f3; color: #fff; border: 0; }

.news { height: 24px; flex: none; display: flex; align-items: center; box-sizing: border-box; border-top: 2px solid #d9dce8; padding: 0 0 2px 31px; font-size: 13px; color: #333; background: #fff; }
.nitem { flex: none; white-space: nowrap; }
.n1 { width: 344px; }
.n2 { width: 435px; }
.n3 { width: 464px; }
.n4 { width: 289px; color: #f58a0c; font-size: 12.6px; }
.n5 { width: 310px; }
.n6 { width: 47px; }

.ticker { flex: 1; display: flex; align-items: center; position: relative; border-top: 1px solid #e4e6ee; box-sizing: border-box; background: #fff; }
.tk { width: 355.6px; height: 100%; box-sizing: border-box; flex: none; border-right: 1px solid #e2e3e8; display: flex; justify-content: center; align-items: center; gap: 9px; padding-bottom: 3px; background: #fffdf2; white-space: nowrap; font-size: 14px; }
.tk:nth-child(5) { border-right: 0; }
.tl { color: #f5860b; margin-right: -5px; }
.tn { color: #109040; }
.ta { color: #f5900a; }
.ticons { position: absolute; left: 1785px; top: 5px; display: flex; gap: 9px; align-items: center; }
.tdot { left: 1881px; top: 2px; width: 8px; height: 8px; }

.annot { position: absolute; left: 0; top: 0; pointer-events: none; }
.wlogo { position: absolute; left: 1494px; top: 962px; pointer-events: none; }
.wtext {
  position: absolute;
  left: 1588px;
  top: 954px;
  font-size: 52px;
  line-height: 68px;
  white-space: nowrap;
  font-weight: 300;
  color: rgba(255, 255, 255, 0.85);
  -webkit-text-stroke: 1px rgba(150, 150, 150, 0.8);
  pointer-events: none;
}
</style>
